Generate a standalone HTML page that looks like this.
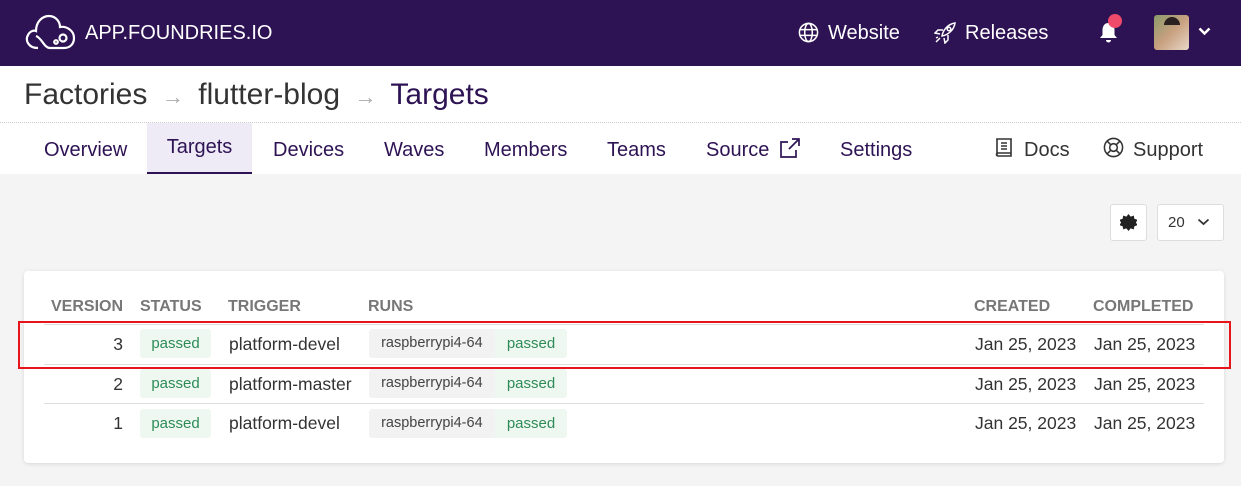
<!DOCTYPE html>
<html><head><style>
*{margin:0;padding:0;box-sizing:border-box}
body{width:1241px;height:486px;overflow:hidden;background:#f4f4f4;font-family:"Liberation Sans",sans-serif;position:relative}
.abs{position:absolute;white-space:nowrap}
.hdr{position:absolute;left:0;top:0;width:1241px;height:66px;background:#2e1354;color:#fff}
.crumb{position:absolute;left:0;top:66px;width:1241px;height:57px;background:#fff;border-bottom:1px dotted #ccc}
.tabs{position:absolute;left:0;top:123px;width:1241px;height:51px;background:#fff}
.tab{position:absolute;top:3px;height:49px;line-height:49px;font-size:20px;color:#2e1354}
.card{position:absolute;left:24px;top:271px;width:1200px;height:192px;background:#fff;border-radius:4px;box-shadow:0 1px 4px rgba(0,0,0,.12)}
.th{position:absolute;top:298px;font-size:16px;font-weight:bold;color:#777}
.cell{position:absolute;font-size:17.5px;color:#333}
.badge{position:absolute;height:29px;line-height:29px;font-size:15px;color:#2e8b57;background:#eef8f1;border-radius:3px;text-align:center}
.run{position:absolute;height:29px;line-height:29px;font-size:14.5px;border-radius:3px;background:#f2f2f2;color:#444;width:198px}
.run span{position:absolute;right:0;top:0;width:72px;height:29px;background:#eef8f1;color:#2e8b57;text-align:center;border-radius:0 3px 3px 0;font-size:15px}
</style></head><body>
<div class="hdr">
<svg class="abs" style="left:24px;top:14px" width="52" height="36" viewBox="0 0 52 36" fill="none" stroke="#fff" stroke-width="2.2"><path d="M14 34 C4 34 1 26 4 21 C6 17 10 16 12 17 C12 8 18 2 25 2 C32 2 36 8 36 13 C42 12 50 16 50 24 C50 30 46 34 40 34 L26 34 C20 34 18 24 12 22"/><circle cx="39" cy="24" r="3.5"/><circle cx="32" cy="28" r="1.8"/></svg>
<div class="abs" style="left:85px;top:22px;font-size:20px">APP.FOUNDRIES.IO</div>
<svg class="abs" style="left:798px;top:22px" width="21" height="21" viewBox="0 0 22 22" fill="none" stroke="#fff" stroke-width="1.6"><circle cx="11" cy="11" r="9.5"/><ellipse cx="11" cy="11" rx="4" ry="9.5"/><path d="M2 8h18M2 14h18"/></svg>
<div class="abs" style="left:828px;top:22px;font-size:20px">Website</div>
<svg class="abs" style="left:934px;top:22px" width="22" height="22" viewBox="0 0 22 22" fill="none" stroke="#fff" stroke-width="1.5"><path d="M8 14 C9 8 14 2 21 1 C20 8 14 13 8 14Z"/><circle cx="15" cy="7" r="1.8"/><path d="M9 8 L4 8 L1 11 L6 12 M14 13 L14 18 L11 21 L10 16 M6 16 L2 20 M4 15 L2 16"/></svg>
<div class="abs" style="left:965px;top:22px;font-size:20px">Releases</div>
<svg class="abs" style="left:1099px;top:22px" width="19" height="21" viewBox="0 0 19 21" fill="#fff"><path d="M9.5 1 C5 1 3.5 5 3.5 8 L3.5 13 L1 16 L18 16 L15.5 13 L15.5 8 C15.5 5 14 1 9.5 1Z"/><path d="M7 18 a2.5 2.5 0 0 0 5 0Z"/></svg>
<div class="abs" style="left:1108px;top:14px;width:14px;height:14px;border-radius:50%;background:#ef4a6a"></div>
<div class="abs" style="left:1154px;top:15px;width:35px;height:35px;border-radius:3px;background:linear-gradient(135deg,#8a9a6a,#c8a080 50%,#e8d8c8)"></div>
<div class="abs" style="left:1164px;top:17px;width:16px;height:8px;border-radius:8px 8px 0 0;background:#2a2020"></div>
<svg class="abs" style="left:1198px;top:27px" width="13" height="9" viewBox="0 0 13 9" fill="none" stroke="#fff" stroke-width="2.5"><path d="M1.5 1.5 L6.5 6.5 L11.5 1.5"/></svg>
</div>
<div class="crumb">
<div class="abs" style="left:24px;top:12px;font-size:30px;color:#333">Factories <span style="color:#aaa;font-size:22px">&nbsp;→&nbsp;</span> flutter-blog <span style="color:#aaa;font-size:22px">&nbsp;→&nbsp;</span> <span style="color:#2e1354">Targets</span></div>
</div>
<div class="tabs">
<div class="tab" style="left:44px">Overview</div>
<div class="tab" style="left:147px;top:0;width:105px;height:51px;background:#eeeaf6;border-bottom:2px solid #2e1354;text-align:center;line-height:49px">Targets</div>
<div class="tab" style="left:273px">Devices</div>
<div class="tab" style="left:384px">Waves</div>
<div class="tab" style="left:484px">Members</div>
<div class="tab" style="left:607px">Teams</div>
<div class="tab" style="left:706px">Source</div>
<svg class="abs" style="left:779px;top:14px" width="22" height="22" viewBox="0 0 22 22" fill="none" stroke="#2e1354" stroke-width="1.7"><path d="M13 2h7v7M20 2 L10 12M17 13v7H2V5h7"/></svg>
<div class="tab" style="left:840px">Settings</div>
<svg class="abs" style="left:994px;top:14px" width="20" height="22" viewBox="0 0 20 22" fill="none" stroke="#333" stroke-width="1.6"><path d="M3 18V2h14v17H4a1.5 1.5 0 0 1 0-3h13M7 6h6M7 9h6M7 12h6"/></svg>
<div class="tab" style="left:1024px;color:#333">Docs</div>
<svg class="abs" style="left:1103px;top:14px" width="21" height="21" viewBox="0 0 22 22" fill="none" stroke="#333" stroke-width="1.6"><circle cx="11" cy="11" r="9.5"/><circle cx="11" cy="11" r="4"/><path d="M4.5 4.5l3.7 3.7M17.5 4.5l-3.7 3.7M4.5 17.5l3.7-3.7M17.5 17.5l-3.7-3.7"/></svg>
<div class="tab" style="left:1133px;color:#333">Support</div>
</div>
<div class="abs" style="left:1110px;top:204px;width:37px;height:37px;background:#fff;border:1px solid #ddd;border-radius:3px"></div>
<svg class="abs" style="left:1120px;top:214px" width="17" height="17" viewBox="0 0 16 16" fill="#222"><path d="M8 0l2 2.5 3-1 .5 3 3 1-1.5 2.5 1.5 2.5-3 1-.5 3-3-1L8 16l-2-2.5-3 1-.5-3-3-1L1 8 -.5 5.5l3-1 .5-3 3 1z"/></svg>
<div class="abs" style="left:1157px;top:204px;width:67px;height:37px;background:#fff;border:1px solid #ddd;border-radius:3px"></div>
<div class="abs" style="left:1168px;top:214px;font-size:15px;color:#333">20</div>
<svg class="abs" style="left:1197px;top:218px" width="13" height="8" viewBox="0 0 13 8" fill="none" stroke="#333" stroke-width="1.8"><path d="M1.5 1.5 L6.5 6 L11.5 1.5"/></svg>
<div class="card"></div>
<div class="th" style="left:51px">VERSION</div>
<div class="th" style="left:140px">STATUS</div>
<div class="th" style="left:228px">TRIGGER</div>
<div class="th" style="left:368px">RUNS</div>
<div class="th" style="left:974px">CREATED</div>
<div class="th" style="left:1093px">COMPLETED</div>
<div class="abs" style="left:44px;top:324px;width:1160px;height:1px;background:#ddd"></div>
<div class="abs" style="left:44px;top:364px;width:1160px;height:1px;background:#ddd"></div>
<div class="abs" style="left:44px;top:403px;width:1160px;height:1px;background:#ddd"></div>

<div class="cell" style="left:103px;top:334px;width:20px;text-align:right">3</div>
<div class="badge" style="left:140px;top:329px;width:71px">passed</div>
<div class="cell" style="left:229px;top:334px">platform-devel</div>
<div class="run" style="left:369px;top:329px">&nbsp;&nbsp;&nbsp;raspberrypi4-64<span>passed</span></div>
<div class="cell" style="left:975px;top:334px">Jan 25, 2023</div>
<div class="cell" style="left:1094px;top:334px">Jan 25, 2023</div>

<div class="cell" style="left:103px;top:374px;width:20px;text-align:right">2</div>
<div class="badge" style="left:140px;top:369px;width:71px">passed</div>
<div class="cell" style="left:229px;top:374px">platform-master</div>
<div class="run" style="left:369px;top:369px">&nbsp;&nbsp;&nbsp;raspberrypi4-64<span>passed</span></div>
<div class="cell" style="left:975px;top:374px">Jan 25, 2023</div>
<div class="cell" style="left:1094px;top:374px">Jan 25, 2023</div>

<div class="cell" style="left:103px;top:413px;width:20px;text-align:right">1</div>
<div class="badge" style="left:140px;top:409px;width:71px">passed</div>
<div class="cell" style="left:229px;top:413px">platform-devel</div>
<div class="run" style="left:369px;top:409px">&nbsp;&nbsp;&nbsp;raspberrypi4-64<span>passed</span></div>
<div class="cell" style="left:975px;top:413px">Jan 25, 2023</div>
<div class="cell" style="left:1094px;top:413px">Jan 25, 2023</div>

<div class="abs" style="left:18px;top:321px;width:1213px;height:48px;border:2px solid #e8141c"></div>
</body></html>
